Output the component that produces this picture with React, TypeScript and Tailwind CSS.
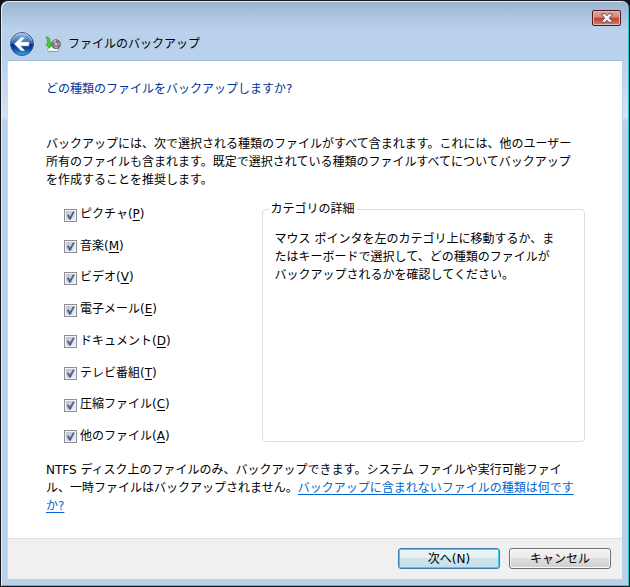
import { useState } from 'react'

interface Category {
  id: string
  label: string
  accessKey: string
}

const categories: Category[] = [
  { id: 'pictures', label: 'ピクチャ', accessKey: 'P' },
  { id: 'music', label: '音楽', accessKey: 'M' },
  { id: 'video', label: 'ビデオ', accessKey: 'V' },
  { id: 'email', label: '電子メール', accessKey: 'E' },
  { id: 'documents', label: 'ドキュメント', accessKey: 'D' },
  { id: 'tv', label: 'テレビ番組', accessKey: 'T' },
  { id: 'archives', label: '圧縮ファイル', accessKey: 'C' },
  { id: 'other', label: '他のファイル', accessKey: 'A' },
]

function BackIcon() {
  return (
    <svg viewBox="0 0 26 26" className="size-[26px]" aria-hidden="true">
      <defs>
        <linearGradient id="back-top" x1="0" y1="0" x2="0" y2="1">
          <stop offset="0" stopColor="#a9c4e6" />
          <stop offset="0.2" stopColor="#6d97cf" />
          <stop offset="0.48" stopColor="#2f62b2" />
          <stop offset="0.52" stopColor="#0a2a7c" />
          <stop offset="0.72" stopColor="#124a9f" />
          <stop offset="1" stopColor="#35b4ea" />
        </linearGradient>
      </defs>
      <circle cx="13" cy="13" r="12.5" fill="#d3e1f1" />
      <circle cx="13" cy="13" r="11.5" fill="url(#back-top)" stroke="#2d5497" />
      <path d="M3.5 9.5a10 10 0 0 1 19 0" fill="none" stroke="#d3e2f3" strokeOpacity="0.6" />
      <path d="M5.5 13 12 6.7h3.4L11.2 11.3h8.6v3.5h-8.6l4.2 4.6H12z" fill="#fff" stroke="#fff" strokeWidth="0.6" strokeLinejoin="round" />
    </svg>
  )
}

function BackupIcon() {
  return (
    <svg viewBox="0 0 16 16" className="size-4" aria-hidden="true">
      <path d="M3 11.8 5 10h7l1.5 2v2.6l-.8.9H3.5l-.8-.9z" fill="#f0f1f1" stroke="#85898c" strokeWidth="0.8" />
      <path d="M4 13h8" stroke="#fff" />
      <circle cx="11" cy="8.2" r="4.5" fill="#7f7b86" stroke="#5f5c65" strokeWidth="0.9" />
      <path d="M11 8.2 7.7 5.4A4.4 4.4 0 0 1 11 4z" fill="#b9b4be" />
      <path d="M11 8.2 15 6.4a4.5 4.5 0 0 1 .2 2.9z" fill="#cb8a9c" />
      <path d="M11 8.2 12.8 12a4.4 4.4 0 0 1-3 .1z" fill="#9aabbb" />
      <circle cx="11" cy="8.2" r="1.4" fill="#e8e8ec" stroke="#6a6770" strokeWidth="0.6" />
      <path d="M.8.8C3 .6 4.8 2 5 4.5V7h1.5l-2 5.2L.8 8.4l1.7-.5C2.8 4.8 2.3 2.5.8.8z" fill="#45d02e" stroke="#299d22" strokeWidth="0.7" />
    </svg>
  )
}

function CloseIcon() {
  return (
    <svg viewBox="0 0 12 10" className="h-[10px] w-3" aria-hidden="true">
      <path
        d="M.8.7h3.4L6 2.8 7.8.7h3.4v1.2L8.3 5l2.9 3.1v1.2H7.8L6 7.2 4.2 9.3H.8V8.1L3.7 5 .8 1.9z"
        fill="#f6f6f6"
        stroke="#545768"
        strokeWidth="1"
      />
    </svg>
  )
}

interface CategoryCheckboxProps {
  category: Category
  checked: boolean
  onChange: () => void
}

function CategoryCheckbox({ category, checked, onChange }: CategoryCheckboxProps) {
  return (
    <li className="flex items-center gap-[3px]">
      <span className="mt-[2px] grid size-[13px] shrink-0">
        <input
          id={category.id}
          type="checkbox"
          checked={checked}
          onChange={onChange}
          className="col-start-1 row-start-1 size-[13px] appearance-none border border-[#8e8f8f] bg-linear-to-br from-[#b5bbc4] to-[#f6f6f6] shadow-[inset_0_0_0_1px_#f4f4f4]"
        />
        {checked && (
          <svg viewBox="0 0 13 13" className="pointer-events-none col-start-1 row-start-1 size-[13px]" aria-hidden="true">
            <path d="M3.2 6.3 4.6 5.7 6 8 9.2 2.6l1.1.3-3.8 7.6H5.4z" fill="#465a9e" stroke="#465a9e" strokeWidth="0.5" />
          </svg>
        )}
      </span>
      <label htmlFor={category.id}>
        {category.label}(<span className="underline underline-offset-2">{category.accessKey}</span>)
      </label>
    </li>
  )
}

export default function App() {
  const [selected, setSelected] = useState<string[]>(categories.map((c) => c.id))

  const toggle = (id: string) => {
    setSelected((prev) => (prev.includes(id) ? prev.filter((item) => item !== id) : [...prev, id]))
  }

  return (
    <div className="min-h-screen bg-[#101418] font-['DejaVu_Sans','Noto_Sans_CJK_JP',sans-serif] text-xs leading-[18px] text-black">
      {/* Window frame */}
      <div className="flex min-h-screen flex-col rounded-t-lg border border-[#15191d] bg-[#b9d1ea] bg-[linear-gradient(to_bottom,#9ab4d0_0px,#a9c2dd_14px,#b9d1ea_28px,#b9d1ea_60px,#d6e3f2_116px,#b9d1ea_120px)] px-[6px] pb-[6px] shadow-[inset_1px_1px_0_#e4eef8,inset_-1px_-1px_0_#35c5e4]">
        <header>
          <div className="flex h-[27px] justify-end pt-[9px] pr-[2px]">
            <button
              type="button"
              aria-label="閉じる"
              className="flex h-4 w-[29px] items-center justify-center rounded-[2px] border border-[#4b1c26] bg-[linear-gradient(to_bottom,#e5a69b_0%,#d78475_45%,#bd4128_50%,#d67c67_100%)] shadow-[inset_0_0_0_1px_#e9b5ab]"
            >
              <CloseIcon />
            </button>
          </div>
          <div className="flex h-8 items-center px-[2px]">
            <button type="button" aria-label="戻る">
              <BackIcon />
            </button>
            <span className="ml-[10px]">
              <BackupIcon />
            </span>
            <h1 className="ml-[7px]">ファイルのバックアップ</h1>
          </div>
        </header>

        <div className="flex flex-1 flex-col border border-t-[#a3bfdc] border-r-[#b9d1ea] border-b-[#b9d1ea] border-l-[#c9dcf0] bg-white">
          <main className="flex-1 pt-[19px] pr-[37px] pb-5 pl-[38px]">
            <h2 className="text-[#003399]">どの種類のファイルをバックアップしますか?</h2>
            <p className="mt-[37px]">
              バックアップには、次で選択される種類のファイルがすべて含まれます。これには、他のユーザー
              <br />
              所有のファイルも含まれます。既定で選択されている種類のファイルすべてについてバックアップ
              <br />
              を作成することを推奨します。
            </p>

            <div className="mt-[11px] flex items-start">
              <ul className="mt-[5px] flex min-h-[240px] flex-2 flex-col justify-between pl-[18px]">
                {categories.map((category) => (
                  <CategoryCheckbox
                    key={category.id}
                    category={category}
                    checked={selected.includes(category.id)}
                    onChange={() => toggle(category.id)}
                  />
                ))}
              </ul>
              <fieldset className="min-h-[242px] w-3/5 rounded-[4px] border border-[#d5dfe5] px-3 pt-3">
                <legend className="-ml-[6px] px-[2px]">カテゴリの詳細</legend>
                <p>
                  マウス ポインタを左のカテゴリ上に移動するか、ま
                  <br />
                  たはキーボードで選択して、どの種類のファイルが
                  <br />
                  バックアップされるかを確認してください。
                </p>
              </fieldset>
            </div>

            <p className="mt-4">
              NTFS ディスク上のファイルのみ、バックアップできます。システム ファイルや実行可能ファイ
              <br />
              ル、一時ファイルはバックアップされません。
              <a href="#file-types" className="text-[#0066cc] underline underline-offset-2">
                バックアップに含まれないファイルの種類は何です
                <br />
                か?
              </a>
            </p>
          </main>

          <footer className="flex justify-end gap-[9px] border-t border-[#dfdfdf] bg-[#f0f0f0] px-[11px] pt-[9px] pb-[10px]">
            <button
              type="button"
              className="flex h-[21px] w-[102px] items-center justify-center rounded-[3px] border border-[#3c7fb1] bg-[linear-gradient(to_bottom,#eef5f8_0%,#e4eff4_48%,#d0e3ea_50%,#c8dfe9_100%)] shadow-[inset_0_0_0_1px_#43cdf4]"
            >
              次へ(N)
            </button>
            <button
              type="button"
              className="flex h-[21px] w-[102px] items-center justify-center rounded-[3px] border border-[#707070] bg-[linear-gradient(to_bottom,#f2f2f2_0%,#ebebeb_48%,#dddddd_50%,#cfcfcf_100%)] shadow-[inset_0_0_0_1px_#fafafa]"
            >
              キャンセル
            </button>
          </footer>
        </div>
      </div>
    </div>
  )
}
